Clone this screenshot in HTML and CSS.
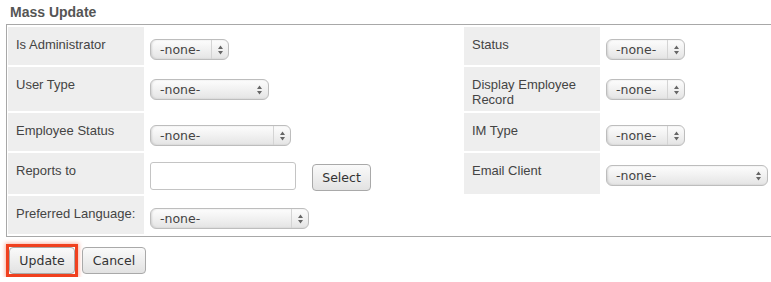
FILE: index.html
```html
<!DOCTYPE html>
<html lang="en">

<head>
    <meta charset="UTF-8">
    <meta name="viewport" content="width=device-width, initial-scale=1.0">
    <title>Mass Update</title>
    <link rel="stylesheet" href="styles.css">
</head>

<body>
    <div class="mass-update">
        <h3 class="mass-update-title">Mass Update</h3>

        <table class="form-table">
            <colgroup>
                <col class="col-label">
                <col class="col-field">
                <col class="col-label-right">
                <col class="col-field-right">
            </colgroup>
            <tr>
                <td class="label">Is Administrator</td>
                <td class="field">
                    <span class="select select-xs split">
                        <span class="select-text">-none-</span>
                        <span class="select-arrow"><svg width="7" height="10" viewBox="0 0 7 10"><path d="M3.5 0.5 L6 4 H1 Z M3.5 9.5 L6 6 H1 Z" fill="#666"/></svg></span>
                    </span>
                </td>
                <td class="label">Status</td>
                <td class="field">
                    <span class="select select-xs split">
                        <span class="select-text">-none-</span>
                        <span class="select-arrow"><svg width="7" height="10" viewBox="0 0 7 10"><path d="M3.5 0.5 L6 4 H1 Z M3.5 9.5 L6 6 H1 Z" fill="#666"/></svg></span>
                    </span>
                </td>
            </tr>
            <tr>
                <td class="label">User Type</td>
                <td class="field">
                    <span class="select select-sm">
                        <span class="select-text">-none-</span>
                        <span class="select-arrow"><svg width="7" height="10" viewBox="0 0 7 10"><path d="M3.5 0.5 L6 4 H1 Z M3.5 9.5 L6 6 H1 Z" fill="#666"/></svg></span>
                    </span>
                </td>
                <td class="label">Display Employee Record</td>
                <td class="field">
                    <span class="select select-xs split">
                        <span class="select-text">-none-</span>
                        <span class="select-arrow"><svg width="7" height="10" viewBox="0 0 7 10"><path d="M3.5 0.5 L6 4 H1 Z M3.5 9.5 L6 6 H1 Z" fill="#666"/></svg></span>
                    </span>
                </td>
            </tr>
            <tr>
                <td class="label">Employee Status</td>
                <td class="field">
                    <span class="select select-md split">
                        <span class="select-text">-none-</span>
                        <span class="select-arrow"><svg width="7" height="10" viewBox="0 0 7 10"><path d="M3.5 0.5 L6 4 H1 Z M3.5 9.5 L6 6 H1 Z" fill="#666"/></svg></span>
                    </span>
                </td>
                <td class="label">IM Type</td>
                <td class="field">
                    <span class="select select-xs split">
                        <span class="select-text">-none-</span>
                        <span class="select-arrow"><svg width="7" height="10" viewBox="0 0 7 10"><path d="M3.5 0.5 L6 4 H1 Z M3.5 9.5 L6 6 H1 Z" fill="#666"/></svg></span>
                    </span>
                </td>
            </tr>
            <tr>
                <td class="label">Reports to</td>
                <td class="field field-input">
                    <div class="input-group">
                        <input class="text-input" type="text">
                        <button class="button button-select">Select</button>
                    </div>
                </td>
                <td class="label">Email Client</td>
                <td class="field">
                    <span class="select select-xl">
                        <span class="select-text">-none-</span>
                        <span class="select-arrow"><svg width="7" height="10" viewBox="0 0 7 10"><path d="M3.5 0.5 L6 4 H1 Z M3.5 9.5 L6 6 H1 Z" fill="#666"/></svg></span>
                    </span>
                </td>
            </tr>
            <tr>
                <td class="label">Preferred Language:</td>
                <td class="field">
                    <span class="select select-lg split">
                        <span class="select-text">-none-</span>
                        <span class="select-arrow"><svg width="7" height="10" viewBox="0 0 7 10"><path d="M3.5 0.5 L6 4 H1 Z M3.5 9.5 L6 6 H1 Z" fill="#666"/></svg></span>
                    </span>
                </td>
                <td class="empty"></td>
                <td class="empty"></td>
            </tr>
        </table>

        <div class="actions">
            <span class="highlight">
                <button class="button button-update">Update</button>
            </span>
            <button class="button button-cancel">Cancel</button>
        </div>
    </div>
</body>

</html>
```

FILE: styles.css
```css
/* Reset and base styles */
* {
    box-sizing: border-box;
    margin: 0;
    padding: 0;
}

body {
    font-family: "Liberation Sans", Arial, sans-serif;
    font-size: 13px;
    color: #444;
    background-color: #fff;
}

/* Title */
.mass-update-title {
    font-size: 14px;
    line-height: 16px;
    font-weight: bold;
    color: #555;
    padding: 4px 10px 0;
    height: 24px;
}

/* Form table */
.form-table {
    margin-left: 6px;
    width: calc(100% - 6px);
    table-layout: fixed;
    border-collapse: separate;
    border-spacing: 1px 2px;
    border-top: 1px solid #a8a8a8;
    border-bottom: 1px solid #a8a8a8;
    border-left: 1px solid #a8a8a8;
}

.col-label {
    width: 136px;
}

.col-field {
    width: 318px;
}

.col-label-right {
    width: 136px;
}

.label {
    background-color: #eee;
    padding: 10px 4px 4px 8px;
    line-height: 15px;
    vertical-align: top;
    font-size: 13px;
    color: #444;
    white-space: nowrap;
}

.label:nth-child(3) {
    white-space: normal;
}

.field {
    padding: 12px 5px 5px;
    vertical-align: top;
}

.field-input {
    padding-top: 8px;
    padding-bottom: 3px;
}

/* Faux select */
.select {
    display: flex;
    align-items: center;
    height: 21px;
    border: 1px solid #bdbdbd;
    border-radius: 6px;
    background: linear-gradient(#fdfdfd, #f1f1f1 50%, #e4e4e4);
    box-shadow: inset 1px 0 2px rgba(0, 0, 0, 0.12);
    font-family: "DejaVu Sans", sans-serif;
    font-size: 12.5px;
    color: #444;
}

.select-text {
    flex: 1;
    padding-left: 9px;
}

.select-arrow {
    width: 17px;
    height: 100%;
    display: flex;
    align-items: center;
    justify-content: center;
}

.split .select-arrow {
    border-left: 1px solid #d4d4d4;
}

.select-xs {
    width: 79px;
}

.select-sm {
    width: 119px;
}

.select-md {
    width: 141px;
}

.select-lg {
    width: 159px;
}

.select-xl {
    width: 162px;
}

/* Reports to */
.input-group {
    display: flex;
    align-items: flex-start;
    gap: 16px;
}

.text-input {
    width: 146px;
    height: 28px;
    margin-top: 1px;
    border: 1px solid #c4c4c4;
    border-radius: 3px;
    background-color: #fff;
}

/* Buttons */
.button {
    height: 27px;
    padding: 0 11px;
    border: 1px solid #a9a9a9;
    border-radius: 4px;
    background: linear-gradient(#fafafa, #e2e2e2);
    font-family: "DejaVu Sans", sans-serif;
    font-size: 12.5px;
    color: #333;
    cursor: pointer;
}

.button-select {
    margin-top: 3px;
    width: 59px;
    padding: 0;
}

.actions {
    display: flex;
    align-items: flex-start;
    gap: 4px;
    padding: 7px 0 0 6px;
}

.highlight {
    display: block;
    border: 3px solid #f0401e;
    box-shadow: 0 0 4px 1px rgba(240, 64, 30, 0.4);
}

.button-update {
    display: block;
    width: 66px;
    height: 27px;
    padding: 0;
}

.button-cancel {
    margin-top: 3px;
    width: 64px;
    padding: 0;
}
```
